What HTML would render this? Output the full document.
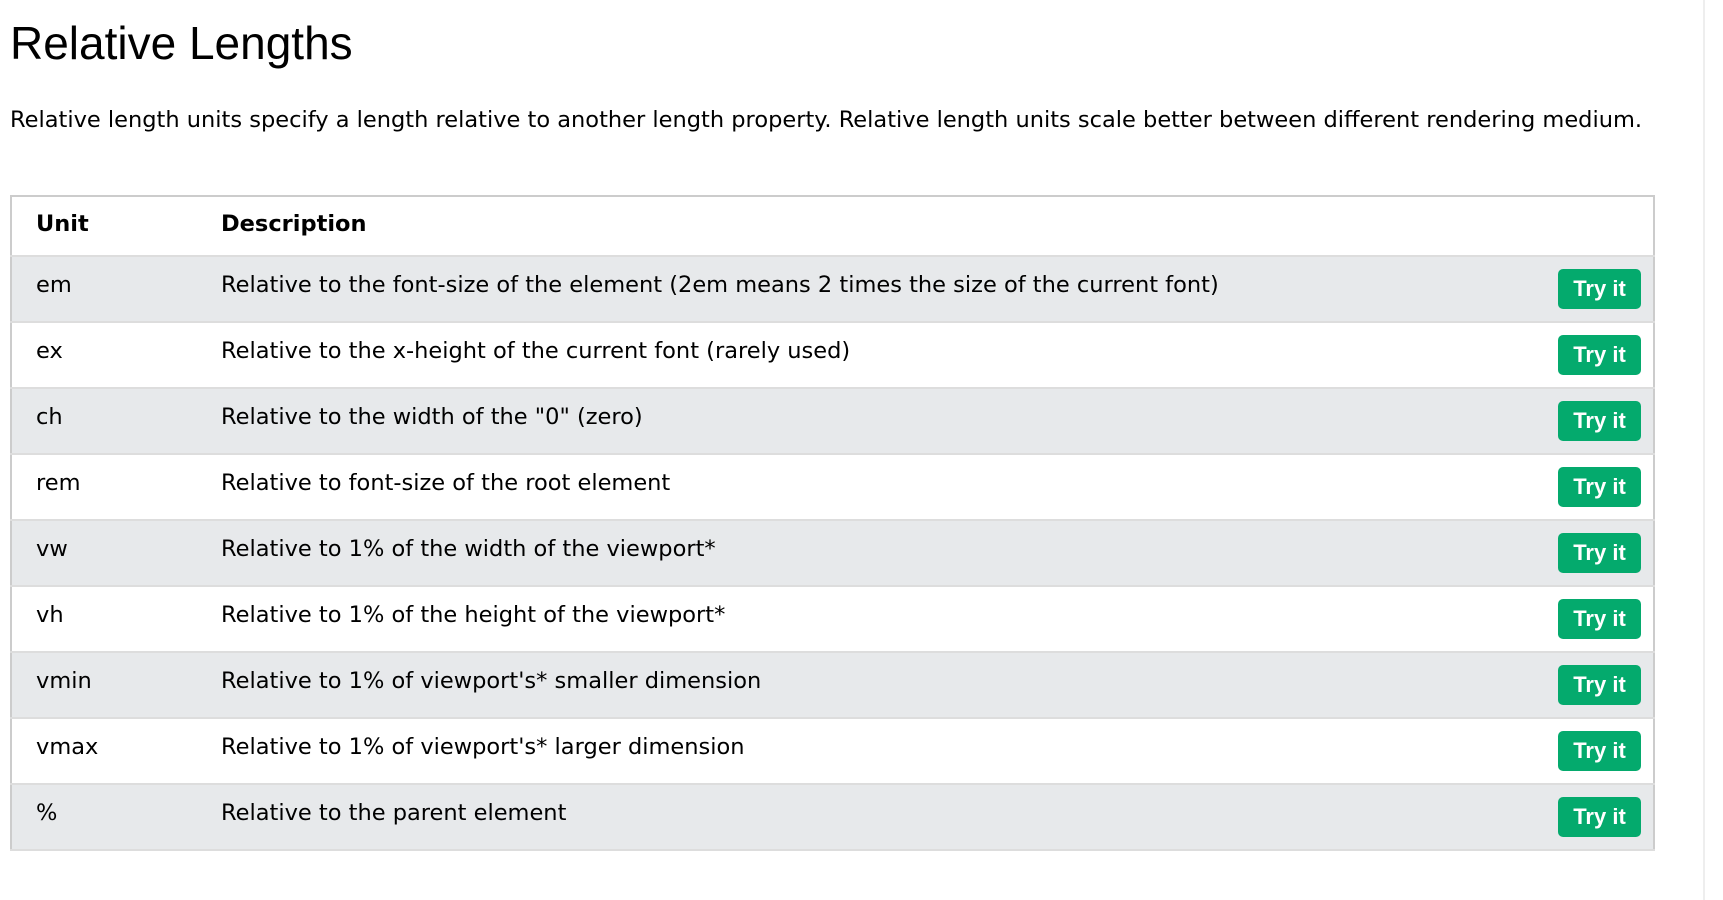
<!DOCTYPE html>
<html><head><style>
body{margin:0;background:#fff;font-family:"DejaVu Sans","Liberation Sans",sans-serif;color:#000;width:1723px;height:900px;overflow:hidden;position:relative}
h1{position:absolute;left:10px;top:16px;margin:0;font-family:"Liberation Sans",sans-serif;font-weight:normal;font-size:46px}
p{position:absolute;left:10px;top:107px;margin:0;font-size:22.5px;white-space:nowrap}
.vl{position:absolute;left:1703px;top:0;width:2px;height:900px;background:#eee}
table{position:absolute;left:10px;top:195px;width:1645px;border-collapse:collapse;border:2px solid #ccc;font-size:22.5px;line-height:1.15;table-layout:fixed}
td,th{text-align:left;padding:0 0 6px 0;height:58px;border-bottom:2px solid #ddd;box-sizing:border-box}
th{padding-bottom:2px}
tr{height:66px}
tr:first-child{height:60px}
tr:nth-child(even){background:#e7e9eb}
td:first-child,th:first-child{padding-left:24px}
.b{display:inline-block;vertical-align:middle;background:#04aa6d;color:#fff;border-radius:5px;width:83px;height:40px;line-height:40px;text-align:center;font-family:"Liberation Sans",sans-serif;font-size:22px;font-weight:bold}
td:last-child{text-align:right;padding:0 12px 0 0}
</style></head><body>
<h1>Relative Lengths</h1>
<p>Relative length units specify a length relative to another length property. Relative length units scale better between different rendering medium.</p>
<div class="vl"></div>
<table>
<colgroup><col style="width:210px"><col><col style="width:120px"></colgroup>
<tr><th>Unit</th><th>Description</th><th></th></tr>
<tr><td>em</td><td>Relative to the font-size of the element (2em means 2 times the size of the current font)</td><td><span class="b">Try it</span></td></tr>
<tr><td>ex</td><td>Relative to the x-height of the current font (rarely used)</td><td><span class="b">Try it</span></td></tr>
<tr><td>ch</td><td>Relative to the width of the "0" (zero)</td><td><span class="b">Try it</span></td></tr>
<tr><td>rem</td><td>Relative to font-size of the root element</td><td><span class="b">Try it</span></td></tr>
<tr><td>vw</td><td>Relative to 1% of the width of the viewport*</td><td><span class="b">Try it</span></td></tr>
<tr><td>vh</td><td>Relative to 1% of the height of the viewport*</td><td><span class="b">Try it</span></td></tr>
<tr><td>vmin</td><td>Relative to 1% of viewport's* smaller dimension</td><td><span class="b">Try it</span></td></tr>
<tr><td>vmax</td><td>Relative to 1% of viewport's* larger dimension</td><td><span class="b">Try it</span></td></tr>
<tr><td>%</td><td>Relative to the parent element</td><td><span class="b">Try it</span></td></tr>
</table>
</body></html>
